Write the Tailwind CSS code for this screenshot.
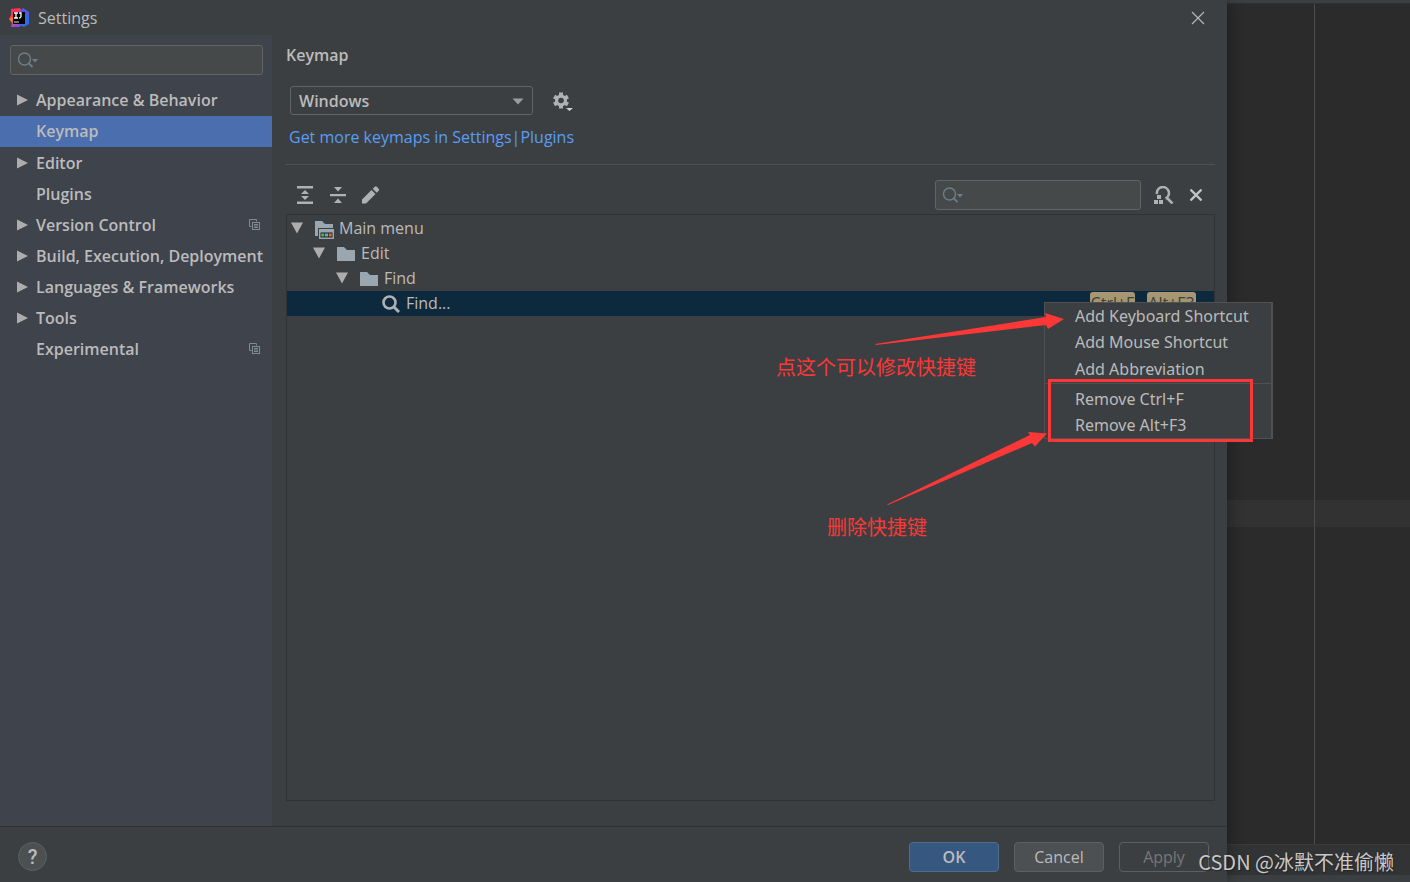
<!DOCTYPE html>
<html lang="en">
<head>
<meta charset="utf-8">
<meta name="viewport" content="width=device-width, initial-scale=1">
<title>Settings</title>
<script src="https://cdn.jsdelivr.net/npm/@tailwindcss/browser@4"></script>
</head>
<body class="bg-[#2b2b2b]">
<svg class="hidden" aria-hidden="true">
  <symbol id="right" viewBox="0 0 12 12"><path d="M1 0.5 12 6 1 11.5z" fill="#adadad"/></symbol>
  <symbol id="down" viewBox="0 0 12 12"><path d="M0 0.5h12L6 11.5z" fill="#adadad"/></symbol>
  <symbol id="copy" viewBox="0 0 11 11"><path d="M2.5 7.5h-2v-7h7v2" fill="none" stroke="#7f8b91"/><rect x="3.500" y="3.500" width="7" height="7" fill="none" stroke="#7f8b91"/><path d="M5 5.500h4M5 7h4M5 8.500h4" stroke="#7f8b91"/></symbol>
  <symbol id="search" viewBox="0 0 20 18"><circle cx="6.500" cy="8" r="6" fill="none" stroke="#6e7e87" stroke-width="1.400"/><path d="M10.800 12.300 14.500 16" stroke="#6e7e87" stroke-width="1.800"/><path d="M14 8h6l-3 3.500z" fill="#6e7e87"/></symbol>
  <symbol id="folder" viewBox="0 0 18 14"><path d="M0 0h7l3 3h8v11H0z" fill="#9aa7b0"/></symbol>
</svg>
<div class="relative flex h-screen min-h-[600px] overflow-hidden font-['Open_Sans','Noto_Sans_CJK_SC',sans-serif] text-base leading-6 text-[#bbbbbb]">
  <div class="z-10 flex min-w-0 flex-1 flex-col bg-[#3c3f41] shadow-[0_0_16px_rgba(0,0,0,0.4)]">
    <header class="flex h-[35px] shrink-0 items-center pr-[22px] pl-[9px]">
      <svg class="size-5" viewBox="0 0 20 20" aria-hidden="true">
        <defs><linearGradient id="lr" x1="0" y1="0" x2="0.300" y2="1"><stop offset="0" stop-color="#ff2d62"/><stop offset="0.450" stop-color="#fe3155"/><stop offset="0.600" stop-color="#fc801d"/><stop offset="1" stop-color="#8f45e0"/></linearGradient></defs>
        <path d="M2 1 11 0l3 4-3 15H2l1-4-3-4 2-4z" fill="url(#lr)"/>
        <path d="M11 3l3-3 6 4v12l-5 3-5-2z" fill="#3568e8"/>
        <path d="M14 0l6 4-1 4-4-3z" fill="#5c55d8"/>
        <rect x="4" y="4" width="12" height="12" fill="#050505"/>
        <path d="M5 5h4M7 5v5M5 10h4M10 5h2v3.500q0 1.500-2 1.500" fill="none" stroke="#fff" stroke-width="1.300"/>
        <path d="M5 14h5" stroke="#aaa" stroke-width="1.300"/>
      </svg>
      <h1 class="ml-[9px] flex-1">Settings</h1>
      <button aria-label="Close"><svg class="size-[14px]" viewBox="0 0 14 14"><path d="M1 1l12 12M13 1 1 13" stroke="#b4b6b7" stroke-width="1.200"/></svg></button>
    </header>
    <div class="flex min-h-0 flex-1">
      <aside class="flex w-[272px] shrink-0 flex-col bg-[#3f434c] pt-[10px]">
        <label class="mr-[9px] mb-[10px] ml-[10px] flex h-[30px] shrink-0 items-center rounded-[3px] border border-[#646464] bg-[#45494a] pl-[7px]">
          <svg class="h-[18px] w-5 shrink-0"><use href="#search"/></svg>
          <input type="text" aria-label="Search settings" class="h-full w-full min-w-0 bg-transparent px-1 outline-none">
        </label>
        <nav class="font-semibold whitespace-nowrap">
          <a href="#" class="flex h-[31px] items-center pr-3 pb-0.5 pl-4"><svg class="mr-2 size-3 shrink-0"><use href="#right"/></svg><span>Appearance &amp; Behavior</span></a>
          <a href="#" class="flex h-[31px] items-center bg-[#4b6eaf] pr-3 pb-0.5 pl-9" aria-current="page"><span>Keymap</span></a>
          <a href="#" class="flex h-[31px] items-center pr-3 pl-4"><svg class="mr-2 size-3 shrink-0"><use href="#right"/></svg><span>Editor</span></a>
          <a href="#" class="flex h-[31px] items-center pr-3 pl-9"><span>Plugins</span></a>
          <a href="#" class="flex h-[31px] items-center pr-3 pl-4"><svg class="mr-2 size-3 shrink-0"><use href="#right"/></svg><span class="flex-1">Version Control</span><svg class="size-[11px]"><use href="#copy"/></svg></a>
          <a href="#" class="flex h-[31px] items-center pr-3 pl-4"><svg class="mr-2 size-3 shrink-0"><use href="#right"/></svg><span>Build, Execution, Deployment</span></a>
          <a href="#" class="flex h-[31px] items-center pr-3 pl-4"><svg class="mr-2 size-3 shrink-0"><use href="#right"/></svg><span>Languages &amp; Frameworks</span></a>
          <a href="#" class="flex h-[31px] items-center pr-3 pl-4"><svg class="mr-2 size-3 shrink-0"><use href="#right"/></svg><span>Tools</span></a>
          <a href="#" class="flex h-[31px] items-center pr-3 pl-9"><span class="flex-1">Experimental</span><svg class="size-[11px]"><use href="#copy"/></svg></a>
        </nav>
      </aside>
      <main class="flex min-w-0 flex-1 flex-col pt-2 pr-3 pb-[25px] pl-[14px]">
        <h2 class="font-semibold">Keymap</h2>
        <div class="mt-[19px] ml-1 flex items-center gap-5">
          <div class="relative h-[29px] w-[243px]">
            <select aria-label="Keymap" class="size-full appearance-none rounded-[3px] border border-[#646464] bg-transparent pl-2 font-semibold outline-none"><option>Windows</option></select>
            <svg class="pointer-events-none absolute top-3 right-[9px] h-[7px] w-3" viewBox="0 0 12 7"><path d="M0.500 0.500h11L6 6.500z" fill="#9a9da0"/></svg>
          </div>
          <button aria-label="Keymap actions"><svg class="h-5 w-[21px]" viewBox="0 0 21 20"><g fill="#afb1b3"><rect x="6" y="1.500" width="4" height="16"/><rect x="6" y="1.500" width="4" height="16" transform="rotate(60 8 9.500)"/><rect x="6" y="1.500" width="4" height="16" transform="rotate(120 8 9.500)"/><circle cx="8" cy="9.500" r="6"/><path d="M13 17h7l-3.500 3z" fill="#d0d2d3"/></g><circle cx="8" cy="9.500" r="2.800" fill="#3c3f41"/></svg></button>
        </div>
        <a href="#" class="mt-[10px] ml-[3px] flex self-start text-[#589df6]"><span>Get more keymaps in Settings</span><span>|</span><span>Plugins</span></a>
        <hr class="mt-[15px] border-[#515151]">
        <div class="mt-[15px] flex h-[30px] shrink-0 items-center">
          <button aria-label="Expand all" class="ml-[11px]"><svg class="h-[18px] w-4" viewBox="0 0 16 18" fill="#afb1b3"><path d="M0 0h16v2.500H0zM0 15.500h16V18H0zM8 4l4 4H4zM4 10h8l-4 4z"/></svg></button>
          <button aria-label="Collapse all" class="ml-[17px]"><svg class="h-[18px] w-4" viewBox="0 0 16 18" fill="#afb1b3"><path d="M0 8h16v2.200H0zM4 1h8L8 5.500zM8 12.500l4 4.500H4z"/></svg></button>
          <button aria-label="Edit shortcut" class="ml-4"><svg class="size-[18px]" viewBox="0 0 18 18" fill="#afb1b3"><path d="M0 17.500v-4L9.500 4l4 4L4 17.500zM10.700 2.800 12.800 0.700q1-.8 2 0L16.700 2.700q.8 1 0 2L14.700 6.800z"/></svg></button>
          <label class="mr-[13px] ml-auto flex h-[30px] w-[206px] items-center rounded-[3px] border border-[#646464] bg-[#45494a] pl-[7px]">
            <svg class="h-[18px] w-5 shrink-0"><use href="#search"/></svg>
            <input type="text" aria-label="Search actions" class="h-full w-full min-w-0 bg-transparent px-1 outline-none">
          </label>
          <button aria-label="Find by shortcut"><svg class="h-[18px] w-5" viewBox="0 0 20 18"><path d="M3 8A6 6 0 1 1 11.500 12.500M12.500 11.500l6 6" fill="none" stroke="#afb1b3" stroke-width="2.600"/><path d="M3 9h4v4H3zM0 14h4v4H0zM5 14h4v4H5z" fill="#afb1b3"/></svg></button>
          <button aria-label="Clear" class="mr-[13px] ml-4"><svg class="size-3" viewBox="0 0 12 12"><path d="M0.500 0.500l11 11M11.500 0.500l-11 11" stroke="#c0c2c4" stroke-width="2.300"/></svg></button>
        </div>
        <div role="tree" class="mt-1 min-h-0 flex-1 border border-[#323232] pt-px">
          <div role="treeitem" class="flex h-[25px] items-center pb-0.5 pl-1"><svg class="mr-3 size-3"><use href="#down"/></svg>
            <svg class="mt-1 mr-[5px] h-[18px] w-[19px]" viewBox="0 0 19 18"><path d="M0 0h7l3 3h8v4H3v8H0z" fill="#9aa7b0"/><path d="M4 8h15v10H4z" fill="#9aa7b0"/><path d="M5.500 11.500h12v5h-12z" fill="#231f20"/><path d="M6.300 12.500h3v3h-3z" fill="#62b543"/><path d="M10 12.500h3v3h-3z" fill="#40b6e0"/><path d="M13.700 12.500h3v3h-3z" fill="#f26522"/></svg>Main menu</div>
          <div role="treeitem" class="flex h-[25px] items-center pb-0.5 pl-[26px]"><svg class="mr-3 size-3"><use href="#down"/></svg><svg class="mt-0.5 mr-[6px] h-[14px] w-[18px]"><use href="#folder"/></svg>Edit</div>
          <div role="treeitem" class="flex h-[25px] items-center pb-0.5 pl-[49px]"><svg class="mr-3 size-3"><use href="#down"/></svg><svg class="mt-0.5 mr-[6px] h-[14px] w-[18px]"><use href="#folder"/></svg>Find</div>
          <div role="treeitem" aria-selected="true" class="flex h-[25px] items-center bg-[#0d293e] pr-[18px] pb-0.5 pl-[95px]"><svg class="mt-0.5 mr-[6px] size-[18px]" viewBox="0 0 18 18"><circle cx="7.500" cy="7.500" r="6" fill="none" stroke="#afb1b3" stroke-width="2.600"/><path d="M11.500 11.500 17 17" stroke="#afb1b3" stroke-width="3"/></svg><span class="flex-1">Find...</span>
            <span class="mt-0.5 mr-3 flex h-[23px] w-[45px] items-center justify-center rounded-[3px] bg-linear-to-b from-[#a89779] to-[#9c9654] pb-0.5 text-base text-[#3c3f41]">Ctrl+F</span>
            <span class="mt-0.5 flex h-[23px] w-[49px] items-center justify-center rounded-[3px] bg-linear-to-b from-[#a89779] to-[#9c9654] pb-0.5 text-base text-[#3c3f41]">Alt+F3</span>
          </div>
        </div>
      </main>
    </div>
    <footer class="flex h-14 shrink-0 items-center border-t border-[#323232] pt-1 pr-[18px] pl-[18px]">
      <button aria-label="Help" class="size-[29px] rounded-full border border-[#5e6060] bg-[#4c5052] font-['Roboto',sans-serif] text-xl font-medium">?</button>
      <button class="mr-[15px] ml-auto h-[30px] w-[90px] rounded-[4px] border border-[#4c708c] bg-[#365880] font-semibold">OK</button>
      <button class="mr-[15px] h-[30px] w-[90px] rounded-[4px] border border-[#5e6060] bg-[#4c5052]">Cancel</button>
      <button disabled class="h-[30px] w-[90px] rounded-[4px] border border-[#5e6060] text-[#777777]">Apply</button>
    </footer>
  </div>
  <div class="flex w-[183px] shrink-0 flex-col bg-[#2b2b2b]">
    <div class="h-[3px] bg-[#3c3f41]"></div>
    <div class="flex flex-1 flex-col border-t border-[#323232]">
      <div class="ml-[87px] h-[496px] border-l border-[#4d4d4d]"></div>
      <div class="h-[27px] bg-[#323232]"><div class="ml-[87px] h-full border-l border-[#4d4d4d]"></div></div>
      <div class="ml-[87px] flex-1 border-l border-[#4d4d4d]"></div>
    </div>
    <div class="h-[31px] border-t border-[#3a3a3a] bg-[#313335]"></div>
    <div class="h-[7px] bg-[#3c3f41]"></div>
  </div>

  <div role="menu" class="absolute top-[302px] right-[137px] z-20 flex w-[229px] flex-col border border-r-2 border-[#515151] bg-[#3c3f41] font-['Noto_Sans',sans-serif]">
    <button role="menuitem" class="h-[26px] pl-[30px] text-left">Add Keyboard Shortcut</button>
    <button role="menuitem" class="h-[26px] pl-[30px] text-left">Add Mouse Shortcut</button>
    <button role="menuitem" class="h-[28px] pl-[30px] text-left">Add Abbreviation</button>
    <hr class="mb-[2px] border-[#515151]">
    <button role="menuitem" class="h-[26px] pl-[30px] text-left">Remove Ctrl+F</button>
    <button role="menuitem" class="h-[26px] pl-[30px] text-left">Remove Alt+F3</button>
  </div>

  <div class="pointer-events-none absolute top-[300px] right-[157px] z-30 h-[250px] w-[493px] text-xl leading-6 text-[#fc3737]">
    <svg class="size-full" viewBox="0 0 493 250" fill="#fc3737"><path d="M115 44 286 17 285 13 304 19 288 29 286 25 116 45zM127 204.500 270 135 268 132 287 133.500 275 146.500 272 143 128 205z"/><rect x="289.500" y="80.500" width="202" height="60" fill="none" stroke="#fc3737" stroke-width="3"/></svg>
    <p class="absolute top-14 left-4">点这个可以修改快捷键</p>
    <p class="absolute top-[216px] left-[67px]">删除快捷键</p>
  </div>
  <p class="absolute right-4 bottom-2 z-30 font-['Noto_Sans_CJK_SC',sans-serif] text-xl leading-6 text-[#c8c8c8] [text-shadow:1px_1px_1px_#222]">CSDN @冰默不准偷懒</p>
</div>
</body>
</html>
